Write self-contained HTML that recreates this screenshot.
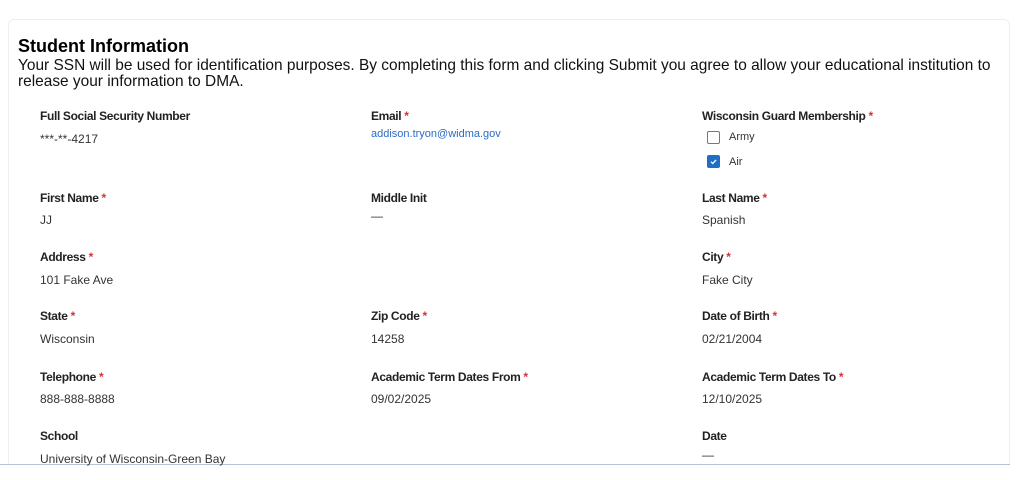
<!DOCTYPE html>
<html><head><style>
body{margin:0;width:1024px;height:480px;background:#fff;font-family:"Liberation Sans",sans-serif;position:relative;overflow:hidden;color:#000}
.card{position:absolute;left:8px;top:19px;width:1002px;height:446px;border:1px solid #eeeeee;border-bottom:none;border-radius:6px 6px 0 0;box-sizing:border-box}
.line{position:absolute;left:0;top:464px;width:1010px;height:1px;background:#b8c4d4}
h1{position:absolute;left:18px;top:36px;margin:0;font-size:18px;font-weight:bold;line-height:20px}
.d{position:absolute;left:18px;top:58px;width:1000px;font-size:15.45px;line-height:16px;color:#111;white-space:nowrap}
.l{position:absolute;font-size:12px;font-weight:bold;color:#222;line-height:14px;letter-spacing:-0.35px}
.l i{color:#d13438;font-style:normal}
.v{position:absolute;font-size:12px;color:#333;line-height:14px}
.cb{position:absolute;width:11px;height:11px;border:1px solid #777;border-radius:2px}
</style></head><body>
<div class="card"></div>
<div class="line"></div>
<h1>Student Information</h1>
<div class="d">Your SSN will be used for identification purposes. By completing this form and clicking Submit you agree to allow your educational institution to<br>release your information to DMA.</div>

<div class="l" style="left:40px;top:109px">Full Social Security Number</div>
<div class="v" style="left:40px;top:132px">***-**-4217</div>
<div class="l" style="left:371px;top:109px">Email <i>*</i></div>
<div class="v" style="left:371px;top:127px;color:#2b6cc4;font-size:11px">addison.tryon@widma.gov</div>
<div class="l" style="left:702px;top:109px">Wisconsin Guard Membership <i>*</i></div>
<div class="cb" style="left:707px;top:131px"></div>
<div class="v" style="left:729px;top:130px;font-size:11px">Army</div>
<div class="cb" style="left:707px;top:155px;background:#1f6fc5;border-color:#1f6fc5"><svg width="11" height="11" viewBox="0 0 11 11" style="position:absolute;left:0;top:0"><path d="M3 5.8l1.8 1.7L8 4" stroke="#fff" stroke-width="1.3" fill="none"/></svg></div>
<div class="v" style="left:729px;top:155px;font-size:11px">Air</div>

<div class="l" style="left:40px;top:191px">First Name <i>*</i></div>
<div class="v" style="left:40px;top:213px">JJ</div>
<div class="l" style="left:371px;top:191px">Middle Init</div>
<div class="v" style="left:371px;top:209px">—</div>
<div class="l" style="left:702px;top:191px">Last Name <i>*</i></div>
<div class="v" style="left:702px;top:213px">Spanish</div>

<div class="l" style="left:40px;top:250px">Address <i>*</i></div>
<div class="v" style="left:40px;top:273px">101 Fake Ave</div>
<div class="l" style="left:702px;top:250px">City <i>*</i></div>
<div class="v" style="left:702px;top:273px">Fake City</div>

<div class="l" style="left:40px;top:309px">State <i>*</i></div>
<div class="v" style="left:40px;top:332px">Wisconsin</div>
<div class="l" style="left:371px;top:309px">Zip Code <i>*</i></div>
<div class="v" style="left:371px;top:332px">14258</div>
<div class="l" style="left:702px;top:309px">Date of Birth <i>*</i></div>
<div class="v" style="left:702px;top:332px">02/21/2004</div>

<div class="l" style="left:40px;top:370px">Telephone <i>*</i></div>
<div class="v" style="left:40px;top:392px">888-888-8888</div>
<div class="l" style="left:371px;top:370px">Academic Term Dates From <i>*</i></div>
<div class="v" style="left:371px;top:392px">09/02/2025</div>
<div class="l" style="left:702px;top:370px">Academic Term Dates To <i>*</i></div>
<div class="v" style="left:702px;top:392px">12/10/2025</div>

<div class="l" style="left:40px;top:429px">School</div>
<div class="v" style="left:40px;top:452px">University of Wisconsin-Green Bay</div>
<div class="l" style="left:702px;top:429px">Date</div>
<div class="v" style="left:702px;top:448px">—</div>
</body></html>
